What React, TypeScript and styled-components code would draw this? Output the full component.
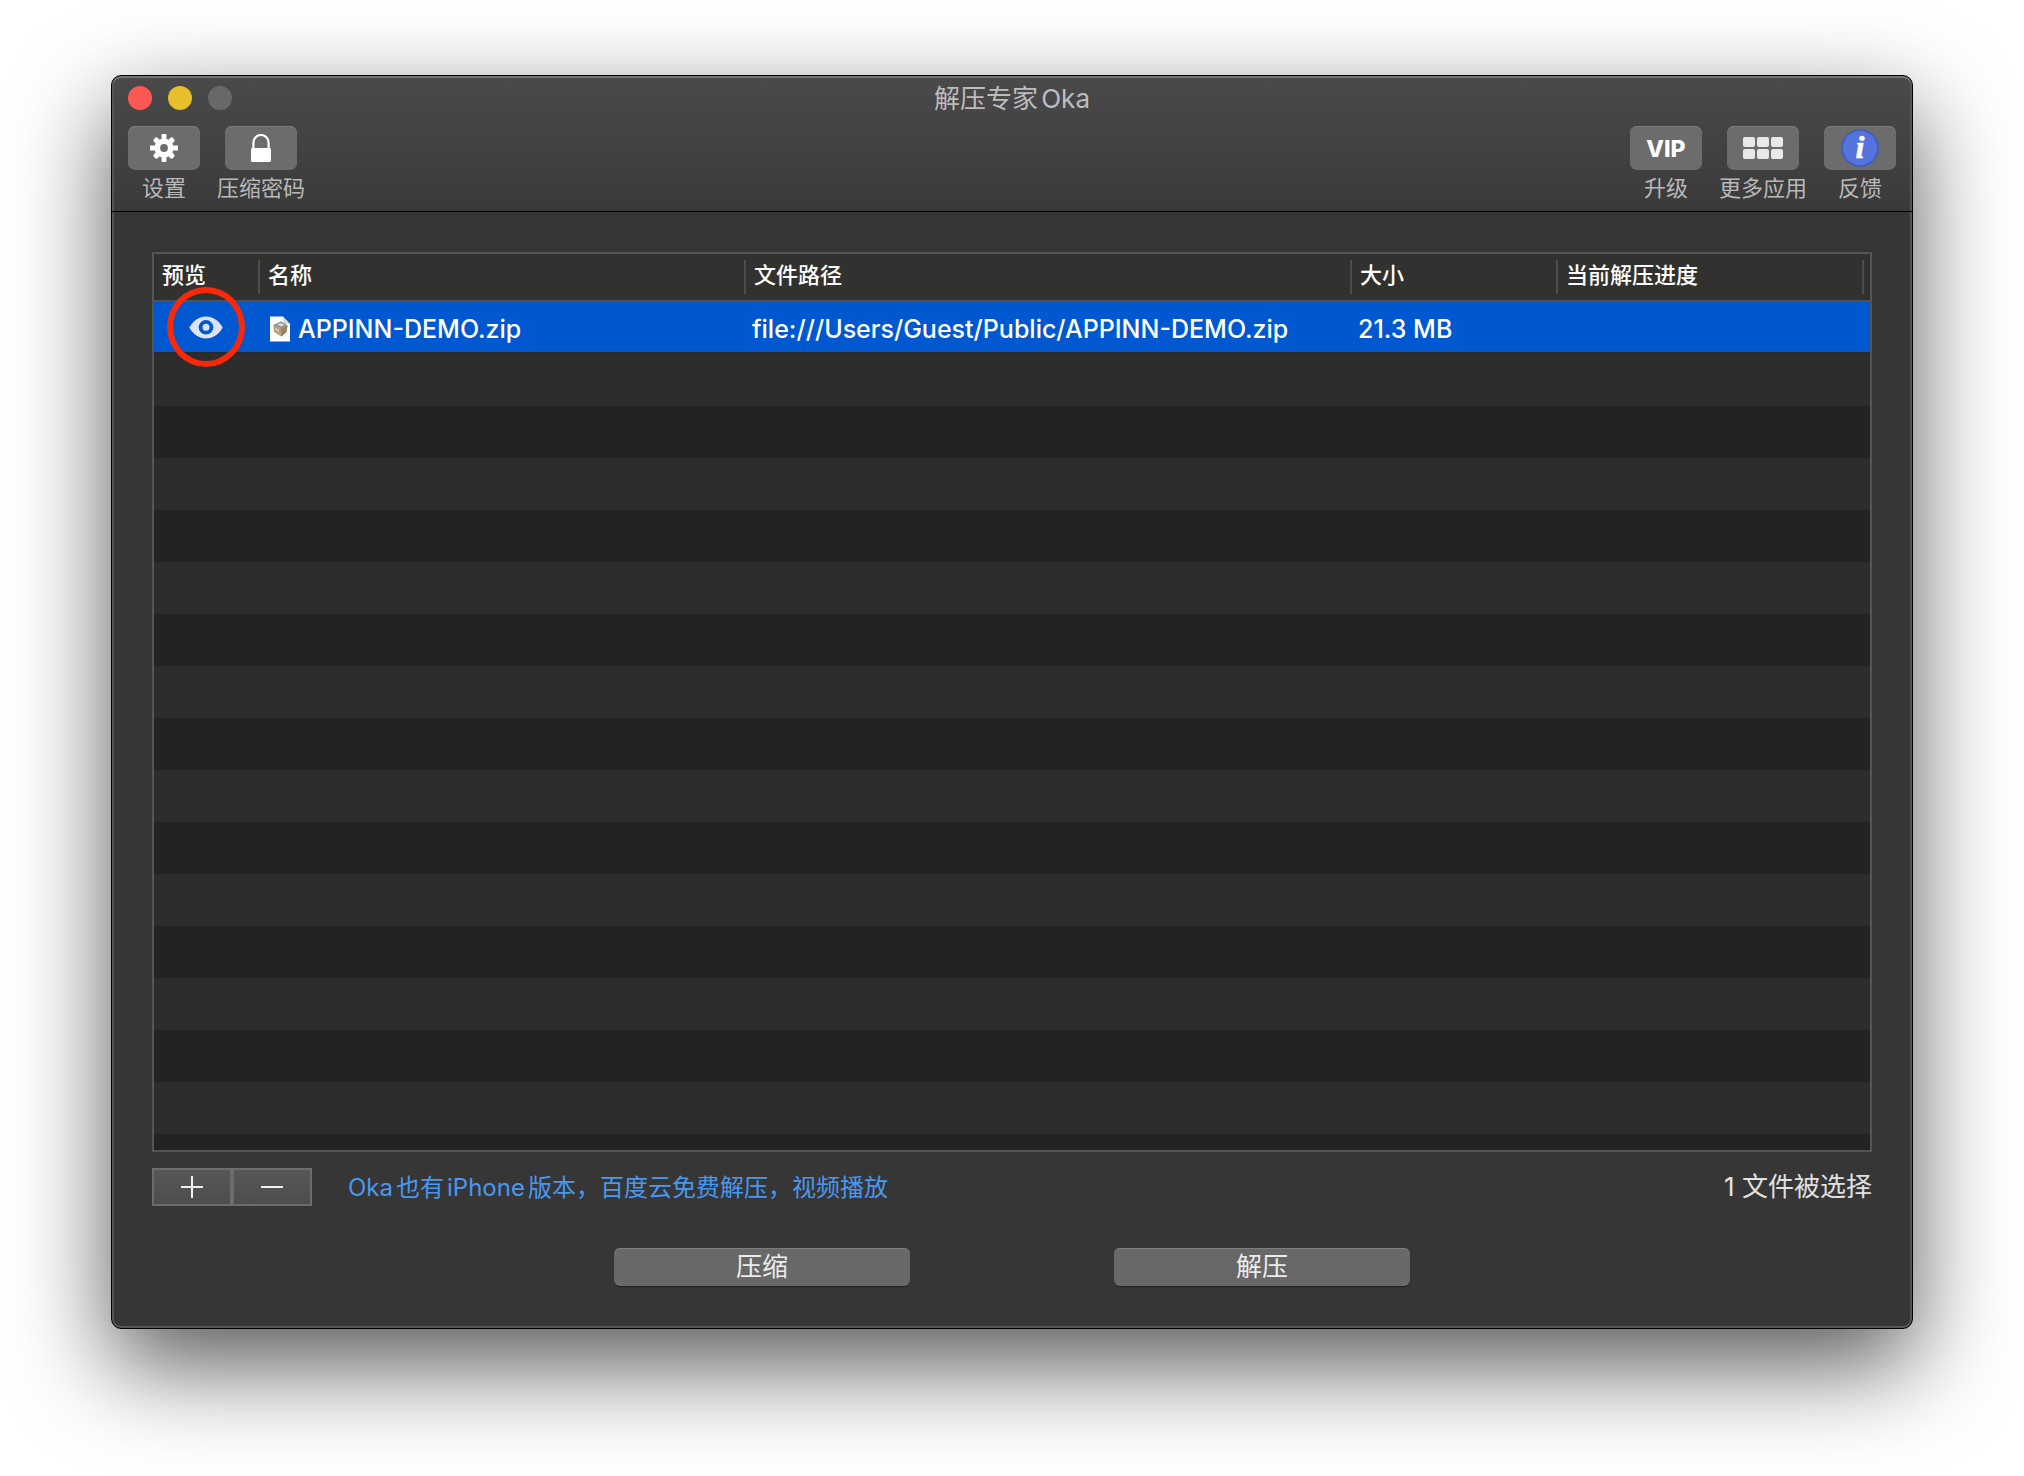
import React from "react";
import styled, { createGlobalStyle } from "styled-components";

const GlobalStyle = createGlobalStyle`
  * { box-sizing: border-box; }
  body {
    margin: 0;
    background: #fff;
    font-family: Inter, "Noto Sans CJK SC", sans-serif;
    text-autospace: normal;
  }
  button {
    font: inherit;
    color: inherit;
    border: 0;
    padding: 0;
    background: none;
  }
`;

const Desktop = styled.div`
  min-height: 100vh;
  padding: 75px 111px 147px;
  display: flex;
  overflow: hidden;
`;

const Window = styled.main`
  flex: 1;
  min-width: 0;
  display: flex;
  flex-direction: column;
  border: 1px solid #000;
  border-radius: 10px;
  background: linear-gradient(#4a4a4a, #3a3a3a 136px, #363636 136px);
  box-shadow:
    inset 0 2px 0 #747573,
    inset 0 0 0 2px #565656,
    0 36px 96px rgba(0, 0, 0, 0.66);
`;

const Header = styled.header`
  border-bottom: 1px solid #000;
`;

const TitleBar = styled.div`
  height: 44px;
  padding: 0 16px;
  display: grid;
  grid-template-columns: 1fr auto 1fr;
  align-items: center;
`;

const Lights = styled.div`
  display: flex;
  gap: 16px;
`;

const Light = styled.button<{ $color: string }>`
  width: 24px;
  height: 24px;
  border-radius: 50%;
  background: ${(p) => p.$color};
`;

const Title = styled.h1`
  margin: 0;
  padding-top: 2px;
  font-size: 26px;
  line-height: 32px;
  font-weight: 400;
  color: #bdbdbd;
`;

const Toolbar = styled.div`
  padding: 6px 16px 9px;
  display: flex;
  justify-content: space-between;
`;

const ToolGroup = styled.div`
  display: flex;
  gap: 17px;
`;

const ToolButton = styled.button`
  min-width: 72px;
  display: flex;
  flex-direction: column;
  align-items: center;
  gap: 4px;
`;

const Plate = styled.span`
  width: 72px;
  height: 44px;
  display: grid;
  place-items: center;
  border-radius: 7px;
  background: #6c6c6c;
  box-shadow: inset 0 1px 0 #7c7c7c;
  color: #fff;
`;

const Vip = styled.span`
  padding-top: 2px;
  font-size: 23px;
  line-height: 28px;
  font-weight: 800;
`;

const ToolLabel = styled.span`
  font-size: 22px;
  line-height: 28px;
  color: #b9b9b9;
`;

const Content = styled.section`
  flex: 1;
  padding: 40px 40px 42px;
  display: flex;
  flex-direction: column;
`;

const TableFrame = styled.div`
  flex: 1;
  display: flex;
  flex-direction: column;
  border: 2px solid #545454;
`;

const FileTable = styled.table`
  width: 100%;
  table-layout: fixed;
  border-collapse: separate;
  border-spacing: 0;
`;

const HeadCell = styled.th<{ $width?: number }>`
  width: ${(p) => (p.$width ? `${p.$width}px` : "auto")};
  height: 48px;
  padding: 0;
  background: #313130;
  border-bottom: 2px solid #505354;
  text-align: left;
  &:last-child {
    padding-right: 6px;
  }
`;

const HeadLabel = styled.span`
  height: 34px;
  padding: 0 0 4px 8px;
  display: flex;
  align-items: center;
  border-right: 2px solid #4d4d4d;
  font-size: 22px;
  line-height: 30px;
  font-weight: 500;
  color: #fff;
`;

const Cell = styled.td`
  height: 52px;
  padding: 4px 6px 0;
  background: #0058d0;
  border-bottom: 2px solid #252a30;
  font-size: 25px;
  font-weight: 500;
  line-height: 32px;
  color: #fff;
  white-space: nowrap;
`;

const PreviewCell = styled(Cell)`
  padding: 0 2px 0 0;
`;

const FileName = styled.span`
  padding-left: 4px;
  display: flex;
  align-items: center;
  gap: 8px;
`;

const Stripes = styled.div`
  flex: 1;
  background: repeating-linear-gradient(#2d2d2d 0 52px, #232323 52px 104px);
`;

const PreviewButton = styled.button`
  position: relative;
  display: grid;
  place-items: center;
  width: 34px;
  height: 24px;
  margin: 0 auto;
`;

const Ring = styled.span`
  position: absolute;
  left: 50%;
  top: 50%;
  width: 78px;
  height: 80px;
  transform: translate(-50%, -50%);
  border: 6px solid #f62a0a;
  border-radius: 50%;
  pointer-events: none;
`;

const StatusRow = styled.div`
  margin-top: 16px;
  display: flex;
  align-items: center;
  height: 38px;
`;

const Segmented = styled.div`
  display: flex;
`;

const Segment = styled.button`
  width: 80px;
  height: 38px;
  display: grid;
  place-items: center;
  border: 2px solid #6c6c6c;
  background: linear-gradient(#575757, #4d4d4d);
`;

const Promo = styled.a`
  margin-left: 36px;
  padding-top: 2px;
  font-size: 24px;
  line-height: 32px;
  color: #4a98ee;
  text-decoration: none;
`;

const Status = styled.span`
  margin-left: auto;
  font-size: 26px;
  line-height: 32px;
  color: #e1e1e1;
`;

const Actions = styled.div`
  margin-top: 42px;
  display: flex;
  justify-content: center;
  gap: 204px;
`;

const ActionButton = styled.button`
  && {
    width: 296px;
    height: 38px;
    border-radius: 6px;
    background: #686868;
    box-shadow: inset 0 1px 0 #7e7e7e, 0 1px 1px rgba(0, 0, 0, 0.4);
    font-size: 26px;
    line-height: 38px;
    color: #ececec;
  }
`;

const GearIcon = () => (
  <svg width="28" height="28" viewBox="-14 -14 28 28" aria-hidden="true">
    <g fill="#fff">
      <circle r="9.6" />
      {[0, 90, 180, 270].map((a) => (
        <rect key={a} x="-2.4" y="-14" width="4.8" height="7" rx="0.6" transform={`rotate(${a})`} />
      ))}
      {[45, 135, 225, 315].map((a) => (
        <rect key={a} x="-2.7" y="-13.4" width="5.4" height="7" rx="2" transform={`rotate(${a})`} />
      ))}
    </g>
    <circle r="3.9" fill="#6c6c6c" />
  </svg>
);

const LockIcon = () => (
  <svg width="20" height="28" viewBox="0 0 20 28" aria-hidden="true">
    <path d="M2.4 15V8.6a7.6 7.6 0 0 1 15.2 0V15" fill="none" stroke="#fff" strokeWidth="2.2" />
    <rect y="14" width="20" height="14" rx="1.6" fill="#fff" />
  </svg>
);

const GridIcon = () => (
  <svg width="40" height="22" viewBox="0 0 40 22" fill="#e8e8e8" aria-hidden="true">
    {[0, 12].map((y) => [0, 14, 28].map((x) => (
      <rect key={`${x}-${y}`} x={x} y={y} width="12" height="10" rx="2" />
    )))}
  </svg>
);

const InfoIcon = () => (
  <svg width="38" height="38" viewBox="0 0 38 38" aria-hidden="true">
    <circle cx="19" cy="19" r="18" fill="#5573dd" stroke="#3f5bc4" strokeWidth="1.6" />
    <text x="19" y="29" textAnchor="middle" fill="#fff" stroke="#fff" strokeWidth="0.6" fontFamily="Liberation Serif, serif" fontStyle="italic" fontWeight="700" fontSize="32">i</text>
  </svg>
);

const EyeIcon = () => (
  <svg width="34" height="24" viewBox="0 0 34 24" aria-hidden="true">
    <path d="M0.3 12.6C4 5.6 10 1.4 17 1.4s13 4.2 16.7 11.2C30 19.4 24 23.6 17 23.6S4 19.4 0.3 12.6Z" fill="#dce2f3" />
    <circle cx="17" cy="12.3" r="5.4" fill="none" stroke="#0058d0" strokeWidth="3.8" />
  </svg>
);

const ZipIcon = () => (
  <svg width="20" height="26" viewBox="0 0 20 26" aria-hidden="true">
    <path d="M0 0.5H13L20 8V25.5H0Z" fill="#fdfdfd" />
    <path d="M13 0.5L20 8H13Z" fill="#d5d9df" />
    <path d="M3.5 9L11 5.5L17.5 9.5L16.5 16L11.5 20.5L4 16Z" fill="#b7a07f" />
    <path d="M3.5 9L11 5.5L17.5 9.5L11 12Z" fill="#8e9296" />
    <path d="M7 8.6L11 7L14.5 9L11 10.4Z" fill="#d8dadb" />
    <path d="M11 12L17.5 9.5L16.5 16L11.5 20.5Z" fill="#9a8260" />
    <path d="M5 11.5L9 13.5V16L5.2 14Z" fill="#dcc9a6" />
  </svg>
);

const PlusIcon = () => (
  <svg width="22" height="22" viewBox="0 0 22 22" fill="#f0f0f0" aria-hidden="true">
    <rect y="10" width="22" height="2" />
    <rect x="10" width="2" height="22" />
  </svg>
);

const MinusIcon = () => (
  <svg width="22" height="22" viewBox="0 0 22 22" fill="#f0f0f0" aria-hidden="true">
    <rect y="10" width="22" height="2" />
  </svg>
);

type Tool = { label: string; icon: React.ReactNode };

const leftTools: Tool[] = [
  { label: "设置", icon: <GearIcon /> },
  { label: "压缩密码", icon: <LockIcon /> },
];

const rightTools: Tool[] = [
  { label: "升级", icon: <Vip>VIP</Vip> },
  { label: "更多应用", icon: <GridIcon /> },
  { label: "反馈", icon: <InfoIcon /> },
];

const columns: { label: string; width?: number }[] = [
  { label: "预览", width: 106 },
  { label: "名称", width: 486 },
  { label: "文件路径", width: 606 },
  { label: "大小", width: 206 },
  { label: "当前解压进度" },
];

const Tools = ({ items }: { items: Tool[] }) => (
  <ToolGroup>
    {items.map((t) => (
      <ToolButton key={t.label} type="button">
        <Plate>{t.icon}</Plate>
        <ToolLabel>{t.label}</ToolLabel>
      </ToolButton>
    ))}
  </ToolGroup>
);

export default function App() {
  return (
    <>
      <GlobalStyle />
      <Desktop>
        <Window>
          <Header>
            <TitleBar>
              <Lights>
                <Light type="button" $color="#fd5952" aria-label="关闭" />
                <Light type="button" $color="#e6bf2b" aria-label="最小化" />
                <Light type="button" $color="#686868" aria-label="缩放" />
              </Lights>
              <Title>解压专家Oka</Title>
            </TitleBar>
            <Toolbar>
              <Tools items={leftTools} />
              <Tools items={rightTools} />
            </Toolbar>
          </Header>
          <Content>
            <TableFrame>
              <FileTable>
                <thead>
                  <tr>
                    {columns.map((c) => (
                      <HeadCell key={c.label} $width={c.width} scope="col">
                        <HeadLabel>{c.label}</HeadLabel>
                      </HeadCell>
                    ))}
                  </tr>
                </thead>
                <tbody>
                  <tr>
                    <PreviewCell>
                      <PreviewButton type="button" aria-label="预览">
                        <EyeIcon />
                        <Ring />
                      </PreviewButton>
                    </PreviewCell>
                    <Cell>
                      <FileName>
                        <ZipIcon />
                        APPINN-DEMO.zip
                      </FileName>
                    </Cell>
                    <Cell>file:///Users/Guest/Public/APPINN-DEMO.zip</Cell>
                    <Cell>21.3 MB</Cell>
                    <Cell />
                  </tr>
                </tbody>
              </FileTable>
              <Stripes />
            </TableFrame>
            <StatusRow>
              <Segmented>
                <Segment type="button" aria-label="添加"><PlusIcon /></Segment>
                <Segment type="button" aria-label="移除"><MinusIcon /></Segment>
              </Segmented>
              <Promo href="#">Oka也有iPhone版本，百度云免费解压，视频播放</Promo>
              <Status>1 文件被选择</Status>
            </StatusRow>
            <Actions>
              <ActionButton type="button">压缩</ActionButton>
              <ActionButton type="button">解压</ActionButton>
            </Actions>
          </Content>
        </Window>
      </Desktop>
    </>
  );
}
